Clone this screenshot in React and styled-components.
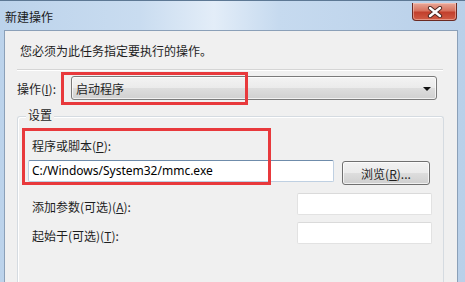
import React from 'react'
import styled, { createGlobalStyle } from 'styled-components'

const GlobalStyle = createGlobalStyle`
html,body{
    margin:0;
    padding:0;
    overflow:hidden;
}
body{
    font-family:"Noto Sans CJK SC","Noto Sans",sans-serif;
    font-size:12px;
    color:#1e1e1e;
}
`

const App = () => {
    return (
        <Window>
            <GlobalStyle/>
            <TitleBar>
                <Title>新建操作</Title>
                <CloseButton>
                    <svg width="16" height="12" viewBox="0 0 16 12">
                        <path d="M3 2 L13 10 M13 2 L3 10" stroke="#4a2520" strokeWidth="4.2" strokeLinecap="round"/>
                        <path d="M3 2 L13 10 M13 2 L3 10" stroke="#ffffff" strokeWidth="2.4" strokeLinecap="round"/>
                    </svg>
                </CloseButton>
            </TitleBar>
            <Frame>
                <Panel>
                    <Intro>您必须为此任务指定要执行的操作。</Intro>
                    <Separator/>
                    <ActionRow>
                        <ActionLabel>操作(<u>I</u>):</ActionLabel>
                        <Combo>
                            <span>启动程序</span>
                            <Arrow/>
                        </Combo>
                    </ActionRow>
                    <Group>
                        <Legend>设置</Legend>
                        <FieldLabel>程序或脚本(<u>P</u>):</FieldLabel>
                        <ProgramRow>
                            <TextBox active width={306}>C:/Windows/System32/mmc.exe</TextBox>
                            <Button>浏览(<u>R</u>)...</Button>
                        </ProgramRow>
                        <OptionRow first>
                            <OptionLabel>添加参数(可选)(<u>A</u>):</OptionLabel>
                            <TextBox width={135}/>
                        </OptionRow>
                        <OptionRow>
                            <OptionLabel>起始于(可选)(<u>T</u>):</OptionLabel>
                            <TextBox width={135}/>
                        </OptionRow>
                    </Group>
                </Panel>
            </Frame>
            <Marker left={61} top={72} width={187} height={33}/>
            <Marker left={22} top={128} width={249} height={57}/>
        </Window>
    )
}

export default App

const Window=styled.div`
position:relative;
width:465px;
height:282px;
display:flex;
flex-direction:column;
background:linear-gradient(90deg,#bcd3eb 0%,#c9dcf0 30%,#e3edf8 46%,#c6daef 60%,#b9d0e9 100%);
overflow:hidden;
`
const TitleBar=styled.div`
height:30px;
flex:none;
display:flex;
justify-content:space-between;
align-items:flex-start;
padding:0 8px 0 5px;
box-sizing:border-box;
border-top:1px solid #5d7894;
`
const Title=styled.div`
margin-top:7px;
font-size:12px;
line-height:18px;
color:#1a1a1a;
`
const CloseButton=styled.div`
margin-top:2px;
width:45px;
height:18px;
box-sizing:border-box;
display:flex;
align-items:center;
justify-content:center;
border:1px solid #6b2a22;
border-top:none;
border-radius:0 0 4px 4px;
background:linear-gradient(#e9a898 0%,#d7735f 45%,#c2402c 55%,#d05c45 100%);
box-shadow:inset 0 0 0 1px rgba(255,220,210,.45);
`
const Frame=styled.div`
flex:1;
display:flex;
padding:0 7px 0 4px;
`
const Panel=styled.div`
flex:1;
background:#f0f0f0;
border:1px solid #8ba0b8;
border-bottom:none;
padding:10px 13px 0 12px;
display:flex;
flex-direction:column;
`
const Intro=styled.div`
margin-left:3px;
line-height:20px;
font-size:12px;
`
const Separator=styled.div`
margin-top:8px;
height:1px;
background:#d5d5d5;
border-bottom:1px solid #ffffff;
width:426px;
`
const ActionRow=styled.div`
margin-top:5px;
display:flex;
align-items:center;
height:24px;
`
const ActionLabel=styled.div`
width:54px;
flex:none;
`
const Combo=styled.div`
width:366px;
height:24px;
box-sizing:border-box;
display:flex;
align-items:center;
justify-content:space-between;
padding:0 5px 0 4px;
border:1px solid #7a7a7a;
border-radius:3px;
background:linear-gradient(#f3f3f3 0%,#ebebeb 48%,#dddddd 52%,#d0d0d0 100%);
box-shadow:inset 0 0 0 1px rgba(255,255,255,.7);
`
const Arrow=styled.div`
width:0;
height:0;
border-left:4px solid transparent;
border-right:4px solid transparent;
border-top:4px solid #111;
margin-top:1px;
`
const Group=styled.div`
margin-top:16px;
flex:1;
border:1px solid #d5dbe1;
border-bottom:none;
border-radius:3px 3px 0 0;
box-shadow:inset 1px 1px 0 #ffffff;
padding:0 10px 0 10px;
display:flex;
flex-direction:column;
`
const Legend=styled.div`
align-self:flex-start;
margin:-10px 0 0 -2px;
padding:0 2px;
line-height:16px;
background:#f0f0f0;
`
const FieldLabel=styled.div`
margin-top:15px;
padding-left:4px;
line-height:16px;
`
const ProgramRow=styled.div`
margin-top:6px;
display:flex;
align-items:flex-start;
gap:8px;
`
const TextBox=styled.div`
width:${p=>p.width}px;
height:22px;
box-sizing:border-box;
background:#ffffff;
border:1px solid ${p=>p.active ? '#bfd0e2' : '#e2e2e2'};
border-top-color:${p=>p.active ? '#6f8cab' : '#dadada'};
border-radius:2px;
padding:0 3px;
font-family:"Noto Sans",sans-serif;
font-size:12px;
line-height:20px;
color:#000;
`
const Button=styled.div`
margin-top:1px;
width:88px;
height:24px;
box-sizing:border-box;
display:flex;
align-items:center;
justify-content:center;
border:1px solid #707070;
border-radius:3px;
background:linear-gradient(#f2f2f2 0%,#ebebeb 48%,#dddddd 52%,#cfcfcf 100%);
box-shadow:inset 0 0 0 1px rgba(255,255,255,.7);
`
const OptionRow=styled.div`
margin-top:${p=>p.first ? '8px' : '7px'};
display:flex;
align-items:center;
justify-content:space-between;
padding:0 1px 0 4px;
height:22px;
`
const OptionLabel=styled.div`
margin-top:4px;
`
const Marker=styled.div`
position:absolute;
left:${p=>p.left}px;
top:${p=>p.top}px;
width:${p=>p.width}px;
height:${p=>p.height}px;
box-sizing:border-box;
border:3px solid #e8393c;
`
